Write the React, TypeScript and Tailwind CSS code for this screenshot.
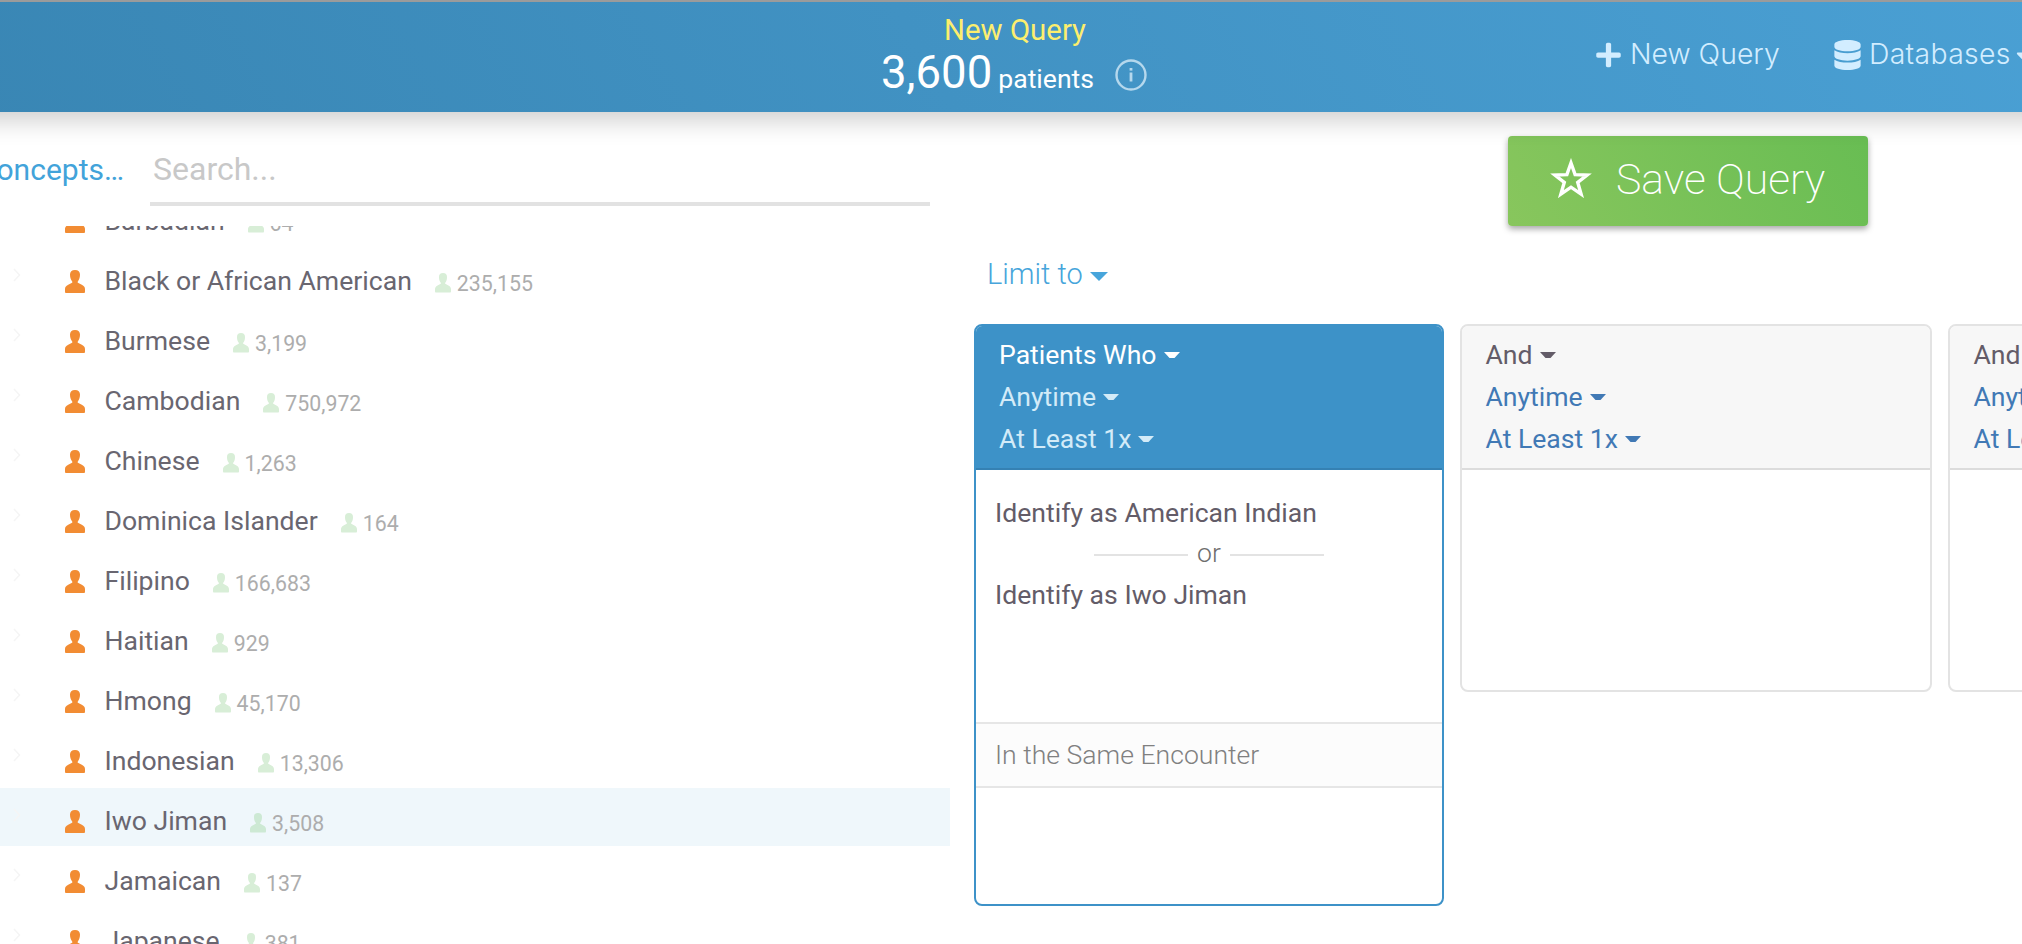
import { FaCaretDown, FaDatabase, FaPlus } from 'react-icons/fa';

const concepts = [
  { name: 'Barbadian', count: '64' },
  { name: 'Black or African American', count: '235,155' },
  { name: 'Burmese', count: '3,199' },
  { name: 'Cambodian', count: '750,972' },
  { name: 'Chinese', count: '1,263' },
  { name: 'Dominica Islander', count: '164' },
  { name: 'Filipino', count: '166,683' },
  { name: 'Haitian', count: '929' },
  { name: 'Hmong', count: '45,170' },
  { name: 'Indonesian', count: '13,306' },
  { name: 'Iwo Jiman', count: '3,508', selected: true },
  { name: 'Jamaican', count: '137' },
  { name: 'Japanese', count: '381' },
];

function Person({ className }: { className: string }) {
  return (
    <svg viewBox="0 0 20 23" preserveAspectRatio="none" className={className} fill="currentColor" aria-hidden="true">
      <path d="M10 0C6.600 0 5 1.800 5 4.600c0 2.700.7 5 2 6.600.6.8.5 1.500-.4 1.900L3.200 14.800C.8 16 0 17.300 0 19.300v2.200C0 22.600.4 23 1.300 23h17.400c.9 0 1.300-.4 1.300-1.500v-2.200c0-2-.8-3.300-3.200-4.500L13.400 13.100c-.9-.4-1-1.100-.4-1.900 1.300-1.600 2-3.900 2-6.600C15 1.800 13.400 0 10 0z" />
    </svg>
  );
}

function Caret({ className }: { className: string }) {
  return (
    <svg viewBox="0 0 16 6" className={className} fill="currentColor" aria-hidden="true">
      <path d="M0 0h16l-5.500 6h-5z" />
    </svg>
  );
}

function ConceptRow({ name, count, selected }: { name: string; count: string; selected?: boolean }) {
  return (
    <div className={selected ? 'mb-0.5 flex h-[58px] shrink-0 bg-[#eff7fb]' : 'mb-0.5 flex h-[58px] shrink-0'}>
      <svg viewBox="0 0 8 14" className="mt-5 ml-[13px] h-3.5 w-2 shrink-0" fill="none" stroke="#f5f5f5" strokeWidth="1.500" aria-hidden="true">
        <path d="M1 1l5.500 6L1 13" />
      </svg>
      <Person className="mt-[22px] ml-11 h-[23px] w-5 shrink-0 text-[#f28c33]" />
      <span className="ml-[19.500px] pt-2 text-[26.6px] leading-[50px] whitespace-nowrap text-[#696670]">{name}</span>
      <Person className={selected ? 'mt-[25px] ml-[23px] h-[19.500px] w-4 shrink-0 text-[#cde9d4]' : 'mt-[25px] ml-[23px] h-[19.500px] w-4 shrink-0 text-[#d8eed7]'} />
      <span className="ml-1.5 pt-[11px] text-[21.300px] leading-[49px] text-[#adadad]">{count}</span>
    </div>
  );
}

function PanelHeader({ title, active }: { title: string; active?: boolean }) {
  return (
    <div
      className={
        active
          ? 'flex h-36 flex-col border-b-2 border-[#3581b3] bg-[#3d92c8] pt-2 pl-[23px] text-[26.6px] leading-[42px] text-[#d3ebf8]'
          : 'flex h-36 flex-col border-b-2 border-[#dcdcdc] bg-[#f7f7f7] pt-2 pl-[23.500px] text-[26.6px] leading-[42px] text-[#4179b5]'
      }
    >
      <div className={active ? 'flex items-center gap-[7px] whitespace-nowrap text-white' : 'flex items-center gap-[7px] whitespace-nowrap text-[#635c68]'}>
        {title}
        <Caret className="h-1.5 w-4 shrink-0" />
      </div>
      <div className="flex items-center gap-[7px] whitespace-nowrap">
        Anytime
        <Caret className="h-1.5 w-4 shrink-0" />
      </div>
      <div className="flex items-center gap-[7px] whitespace-nowrap">
        At Least 1x
        <Caret className="h-1.5 w-4 shrink-0" />
      </div>
    </div>
  );
}

export default function App() {
  return (
    <div className="flex h-[944px] w-full flex-col overflow-hidden bg-white font-[Roboto,sans-serif]">
      <header className="relative z-10 -mx-10 flex h-28 shrink-0 border-t-2 border-[#9b9b9b] bg-[linear-gradient(60deg,#3986b4,#4192c3_46%,#4aa0d4)] px-10 shadow-[0_8px_24px_rgba(0,0,0,0.2)]">
        <div className="flex w-[1596px] shrink-0 pl-[881px]">
          <div className="flex w-[268px] shrink-0 flex-col pt-2.5">
            <div className="text-center text-[29.400px] leading-9 whitespace-nowrap text-[#fcee6e]">New Query</div>
            <div className="flex items-start">
              <div className="flex shrink-0 items-baseline gap-1.5 pt-px leading-[48px] whitespace-nowrap text-white">
                <span className="text-[45.500px]">3,600</span>
                <span className="text-[26.6px]">patients</span>
              </div>
              <svg viewBox="0 0 32 32" className="mt-[11px] ml-[21px] size-8 shrink-0" fill="none" stroke="#b5d8ed" aria-hidden="true">
                <circle cx="16" cy="16" r="14.500" strokeWidth="2.400" />
                <path d="M16 13.500v9" strokeWidth="2.800" />
                <path d="M16 9v2.600" strokeWidth="2.800" />
              </svg>
            </div>
          </div>
        </div>
        <nav className="flex h-[104px] items-center font-[Inter,sans-serif] text-[28.400px] font-light whitespace-nowrap text-[#d2edff]">
          <FaPlus className="mt-px h-[28px] w-[25px] shrink-0" />
          <span className="mt-px ml-[9px] w-[204px]">New Query</span>
          <FaDatabase className="mt-0.5 h-[30px] w-[27px] shrink-0" />
          <span className="mt-px ml-2 tracking-[0.300px]">Databases</span>
          <FaCaretDown className="mt-1 size-7 shrink-0" />
        </nav>
      </header>

      <div className="flex min-h-0 grow">
        <aside className="flex w-[950px] shrink-0 flex-col">
          <div className="flex h-[114px] shrink-0 items-start">
            <div className="flex w-[124px] shrink-0 justify-end overflow-hidden pt-[34px] text-[30px] leading-[48px] whitespace-nowrap text-[#42a3da]">Concepts…</div>
            <div className="mt-[34px] ml-[26px] h-[60px] w-[780px] border-b-4 border-[#e2e2e2] pl-[3px] text-[32px] leading-[46px] text-[#c8c8c8]">Search...</div>
          </div>
          <div className="flex min-h-0 grow flex-col overflow-hidden">
            <div className="-mt-[38px] flex flex-col">
              {concepts.map((c) => (
                <ConceptRow key={c.name} {...c} />
              ))}
            </div>
          </div>
        </aside>

        <main className="flex min-w-0 grow flex-col overflow-hidden pl-6">
          <div className="flex h-[138px] shrink-0 pt-6 pl-[534px]">
            <button className="flex h-[90px] w-[360px] items-center rounded bg-[linear-gradient(60deg,#88c65d,#68bd53)] pb-0.5 pl-[42px] text-[42.800px] leading-none font-extralight whitespace-nowrap text-white shadow-[0_3px_6px_rgba(0,0,0,0.35)]">
              <svg viewBox="0 0 42 40" className="-mt-1 mr-6 h-10 w-[42px] shrink-0" fill="none" stroke="white" strokeWidth="3.400" aria-hidden="true">
                <path d="M21 5l4.100 11.600 12 .4-9.400 7.300 3.400 11.800L21 29.200l-10.100 6.900 3.400-11.800L4.900 17l12-.4z" />
              </svg>
              <span className="-mt-0.5">Save Query</span>
            </button>
          </div>
          <div className="flex h-[74px] shrink-0 items-start gap-2 pt-1 pl-[13px] text-[29px] leading-[40px] font-light text-[#47a5db]">
            <span>Limit to</span>
            <svg viewBox="0 0 18 9" className="mt-[18px] -ml-px h-[9px] w-[18px]" fill="currentColor" aria-hidden="true">
              <path d="M0 0h18L9 9z" />
            </svg>
          </div>
          <div className="flex items-start gap-4">
            <section className="flex h-[582px] w-[470px] shrink-0 flex-col overflow-hidden rounded-lg border-2 border-[#3d92c8] bg-white">
              <PanelHeader title="Patients Who" active />
              <div className="flex h-[252px] flex-col px-[19px] pt-[23px] text-[26.6px] text-[#635c68]">
                <div className="leading-10">Identify as American Indian</div>
                <div className="flex h-[42px] items-center justify-center gap-[9px] text-[#6e6e6e]">
                  <span className="mt-0.5 h-0.5 w-[94px] bg-[#e3e3e3]" />
                  <span className="-mt-0.5 font-light">or</span>
                  <span className="mt-0.5 h-0.5 w-[94px] bg-[#e3e3e3]" />
                </div>
                <div className="leading-10">Identify as Iwo Jiman</div>
              </div>
              <div className="h-[66px] shrink-0 border-y-2 border-[#e6e6e6] bg-[#fcfcfc] pl-[19px] text-[26.6px] leading-[62px] font-light text-[#808080]">In the Same Encounter</div>
            </section>
            <section className="h-[368px] w-[472px] shrink-0 overflow-hidden rounded-lg border-2 border-[#e3e3e3] bg-white">
              <PanelHeader title="And" />
            </section>
            <section className="h-[368px] w-[472px] shrink-0 overflow-hidden rounded-lg border-2 border-[#e3e3e3] bg-white">
              <PanelHeader title="And" />
            </section>
          </div>
        </main>
      </div>
    </div>
  );
}
